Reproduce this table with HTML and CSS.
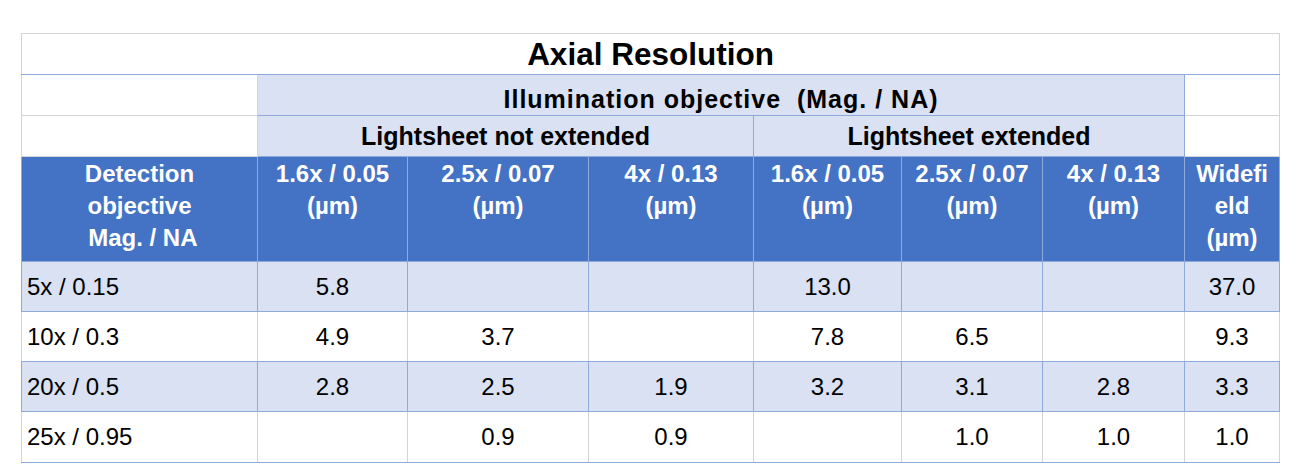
FILE: index.html
```html
<!DOCTYPE html>
<html>
<head>
    <meta charset="UTF-8">
    <title>Axial Resolution</title>
    <link rel="stylesheet" href="styles.css">
</head>
<body>
    <table class="res-table">
        <colgroup>
            <col style="width: 236px">
            <col style="width: 150px">
            <col style="width: 181px">
            <col style="width: 165px">
            <col style="width: 148px">
            <col style="width: 141px">
            <col style="width: 142px">
            <col style="width: 95px">
        </colgroup>
        <tr class="row-title">
            <td colspan="8" class="title">Axial Resolution</td>
        </tr>
        <tr class="row-group">
            <td class="blank"></td>
            <td colspan="6" class="group illum">Illumination objective&nbsp; (Mag. / NA)</td>
            <td class="blank"></td>
        </tr>
        <tr class="row-group">
            <td class="blank"></td>
            <td colspan="3" class="group">Lightsheet not extended</td>
            <td colspan="3" class="group">Lightsheet extended</td>
            <td class="blank"></td>
        </tr>
        <tr class="row-head">
            <th>Detection<br>objective<br>&nbsp;Mag. / NA</th>
            <th>1.6x / 0.05<br>(µm)</th>
            <th>2.5x / 0.07<br>(µm)</th>
            <th>4x / 0.13<br>(µm)</th>
            <th>1.6x / 0.05<br>(µm)</th>
            <th>2.5x / 0.07<br>(µm)</th>
            <th>4x / 0.13<br>(µm)</th>
            <th>Widefi<br>eld<br>(µm)</th>
        </tr>
        <tr class="row-data shaded">
            <td class="label">5x / 0.15</td>
            <td>5.8</td><td></td><td></td>
            <td>13.0</td><td></td><td></td>
            <td>37.0</td>
        </tr>
        <tr class="row-data">
            <td class="label">10x / 0.3</td>
            <td>4.9</td><td>3.7</td><td></td>
            <td>7.8</td><td>6.5</td><td></td>
            <td>9.3</td>
        </tr>
        <tr class="row-data shaded">
            <td class="label">20x / 0.5</td>
            <td>2.8</td><td>2.5</td><td>1.9</td>
            <td>3.2</td><td>3.1</td><td>2.8</td>
            <td>3.3</td>
        </tr>
        <tr class="row-data">
            <td class="label">25x / 0.95</td>
            <td></td><td>0.9</td><td>0.9</td>
            <td></td><td>1.0</td><td>1.0</td>
            <td>1.0</td>
        </tr>
    </table>
</body>
</html>
```

FILE: styles.css
```css
* {
    box-sizing: border-box;
}

body {
    margin: 0;
    padding: 33px 0 0 21px;
    background: #fff;
    font-family: "Liberation Sans", Arial, sans-serif;
    color: #000;
}

.res-table {
    border-collapse: collapse;
    table-layout: fixed;
    width: 1258px;
}

.res-table td,
.res-table th {
    padding: 0;
    border: 1px solid #d4d4d4;
    text-align: center;
}

/* title + group rows */
.row-title,
.row-group {
    height: 41px;
}

.res-table .title {
    font-size: 31.5px;
    font-weight: bold;
    line-height: 36px;
    border-bottom-color: #8ea9db;
}

.res-table .group {
    background: #d9e1f2;
    border-color: #8ea9db;
    font-size: 25px;
    font-weight: bold;
    line-height: 30px;
}

.res-table .illum {
    letter-spacing: 1px;
    vertical-align: top;
    padding-top: 9px;
}

.blank {
    background: #fff;
}

/* column header row */
.row-head {
    height: 105px;
}

.row-head th {
    background: #4472c4;
    color: #fff;
    border-color: #8ea9db;
    font-size: 24px;
    font-weight: bold;
    line-height: 32px;
    vertical-align: top;
    padding-top: 1px;
}

/* data rows */
.row-data {
    height: 50px;
}

.row-data:last-child {
    height: 51px;
}

.row-data td {
    font-size: 24px;
    line-height: 28px;
    border-top-color: #8ea9db;
    border-bottom-color: #8ea9db;
}

.row-data.shaded td {
    background: #d9e1f2;
    border-color: #8ea9db;
}

.res-table .label {
    text-align: left;
    padding-left: 5px;
}
```
